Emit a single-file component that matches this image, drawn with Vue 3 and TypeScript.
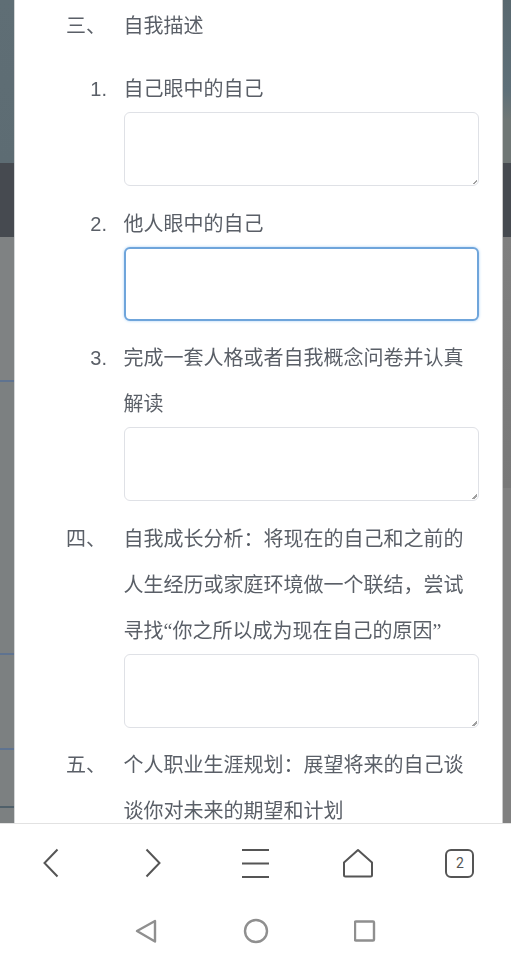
<script setup lang="ts">
interface Item {
  label: string
  text: string
  quote?: string
  field: boolean
  focused?: boolean
  cjk?: boolean
}

const items: Item[] = [
  { label: '三、', cjk: true, text: '自我描述', field: false },
  { label: '1.', text: '自己眼中的自己', field: true },
  { label: '2.', text: '他人眼中的自己', field: true, focused: true },
  { label: '3.', text: '完成一套人格或者自我概念问卷并认真解读', field: true },
  { label: '四、', cjk: true, text: '自我成长分析：将现在的自己和之前的人生经历或家庭环境做一个联结，尝试寻找', quote: '你之所以成为现在自己的原因', field: true },
  { label: '五、', cjk: true, text: '个人职业生涯规划：展望将来的自己谈谈你对未来的期望和计划', field: false },
]
</script>

<template>
  <div class="page">
    <main class="stage">
      <section class="card">
        <div v-for="item in items" :key="item.label" class="item">
          <span class="label" :class="{ cjk: item.cjk }">{{ item.label }}</span>
          <div class="body">
            <p class="text">{{ item.text }}<template v-if="item.quote"><span class="quote">“</span>{{ item.quote }}<span class="quote">”</span></template></p>
            <textarea v-if="item.field" class="field" :class="{ focused: item.focused }"></textarea>
          </div>
        </div>
      </section>
    </main>

    <nav class="browser-bar">
      <span class="cell">
        <svg width="30" height="30" viewBox="0 0 30 30"><path d="M21.500 1.500 8.500 15l13 13.500" class="ink" /></svg>
      </span>
      <span class="cell">
        <svg width="30" height="30" viewBox="0 0 30 30"><path d="M8.500 1.500 21.500 15l-13 13.500" class="ink" /></svg>
      </span>
      <span class="cell">
        <svg width="30" height="30" viewBox="0 0 30 30"><path d="M2 2h27M2 15.500h27M2 29h27" class="ink" /></svg>
      </span>
      <span class="cell">
        <svg width="32" height="30" viewBox="0 0 32 30"><path d="M16 2 30 14.500V27a1.500 1.500 0 0 1-1.500 1.500h-25A1.500 1.500 0 0 1 2 27V14.500Z" class="ink join" /></svg>
      </span>
      <span class="cell">
        <span class="tabs">2</span>
      </span>
    </nav>

    <nav class="system-bar">
      <svg width="24" height="26" viewBox="0 0 24 26"><path d="M21 3V23.500L3 13Z" class="soft" /></svg>
      <svg width="26" height="26" viewBox="0 0 26 26"><circle cx="13" cy="13" r="11" class="soft" /></svg>
      <svg width="24" height="26" viewBox="0 0 24 26"><rect x="1" y="3.500" width="19" height="19" rx="1" class="soft" /></svg>
    </nav>
  </div>
</template>

<style scoped>
.page {
  width: 511px;
  height: 960px;
  overflow: hidden;
  background: #fff;
  display: flex;
  flex-direction: column;
  font-family: "Liberation Sans", "Noto Sans CJK SC", sans-serif;
  color: #5a5f67;
}

.stage {
  height: 823px;
  flex: none;
  overflow: hidden;
  padding: 0 8px 0 14px;
  box-sizing: border-box;
  background:
    linear-gradient(
      to bottom,
      #5f6e75 0,
      #5d6c73 163px,
      #464a50 163px,
      #464a50 237px,
      #7f8283 237px,
      #7f8283 380px,
      #5f7390 380px,
      #5f7390 382px,
      #7c8081 382px,
      #7c8081 653px,
      #5f7390 653px,
      #5f7390 655px,
      #7c8081 655px,
      #7c8081 748px,
      #5f7390 748px,
      #5f7390 750px,
      #7c8081 750px,
      #7c8081 806px,
      #50606a 806px,
      #50606a 808px,
      #7c8081 808px
    ) left top / 14px 100% no-repeat,
    linear-gradient(
      to bottom,
      #59686f 0,
      #5e6f78 90px,
      #6f7675 120px,
      #6f7675 163px,
      #464a50 163px,
      #464a50 237px,
      #7f7f7f 237px,
      #787878 488px,
      #808080 488px
    ) right top / 9px 100% no-repeat;
}

.card {
  background: #fff;
  height: 100%;
  padding: 3px 23px 0 52px;
  box-sizing: border-box;
  overflow: hidden;
  border-left: 1px solid #d4d6d7;
  border-right: 1px solid #c8c8c8;
}

.item {
  display: grid;
  grid-template-columns: 40px 355px;
  column-gap: 17px;
  font-size: 20px;
  line-height: 46px;
  margin-bottom: 14.500px;
}

.item:first-child {
  margin-bottom: 17px;
}

.label {
  text-align: right;
  filter: blur(0.3px);
}

.label.cjk {
  margin: 0 1px 0 -1px;
}

.text {
  margin: 0 0 0 -0.500px;
  filter: blur(0.3px);
}

.quote {
  font-family: "Liberation Serif", serif;
}

.field {
  display: block;
  width: 355px;
  height: 74px;
  box-sizing: border-box;
  border: 1px solid #dfe1e6;
  border-radius: 6px;
  background: #fff;
  outline: none;
  margin: 0;
  padding: 0;
}

.field::-webkit-resizer {
  background: linear-gradient(135deg, transparent 50%, #a0a0a0 50%, #a0a0a0 75%, transparent 75%) right 1px bottom 1px / 5px 5px no-repeat;
}

.field.focused {
  border: 2px solid #6fa5db;
  box-shadow: 0 0 3px #a9d0f5;
  resize: none;
}

.browser-bar {
  height: 79px;
  flex: none;
  box-sizing: border-box;
  border-top: 1px solid #e2e2e2;
  display: grid;
  grid-template-columns: repeat(5, 1fr);
  align-items: center;
  background: #fff;
}

.cell {
  display: flex;
  justify-content: center;
  align-items: center;
}

.ink {
  fill: none;
  stroke: #555;
  stroke-width: 2;
}

.join {
  stroke-linejoin: round;
}

.tabs {
  width: 25px;
  height: 25px;
  border: 2px solid #555;
  border-radius: 6px;
  display: flex;
  align-items: center;
  justify-content: center;
  font-size: 14px;
  color: #555;
  font-family: "Roboto", sans-serif;
}

.system-bar {
  flex: 1;
  display: flex;
  justify-content: center;
  align-items: center;
  gap: 85px;
  background: #fff;
}

.soft {
  fill: none;
  stroke: #8f8f8f;
  stroke-width: 2.400;
  stroke-linejoin: round;
}
</style>
